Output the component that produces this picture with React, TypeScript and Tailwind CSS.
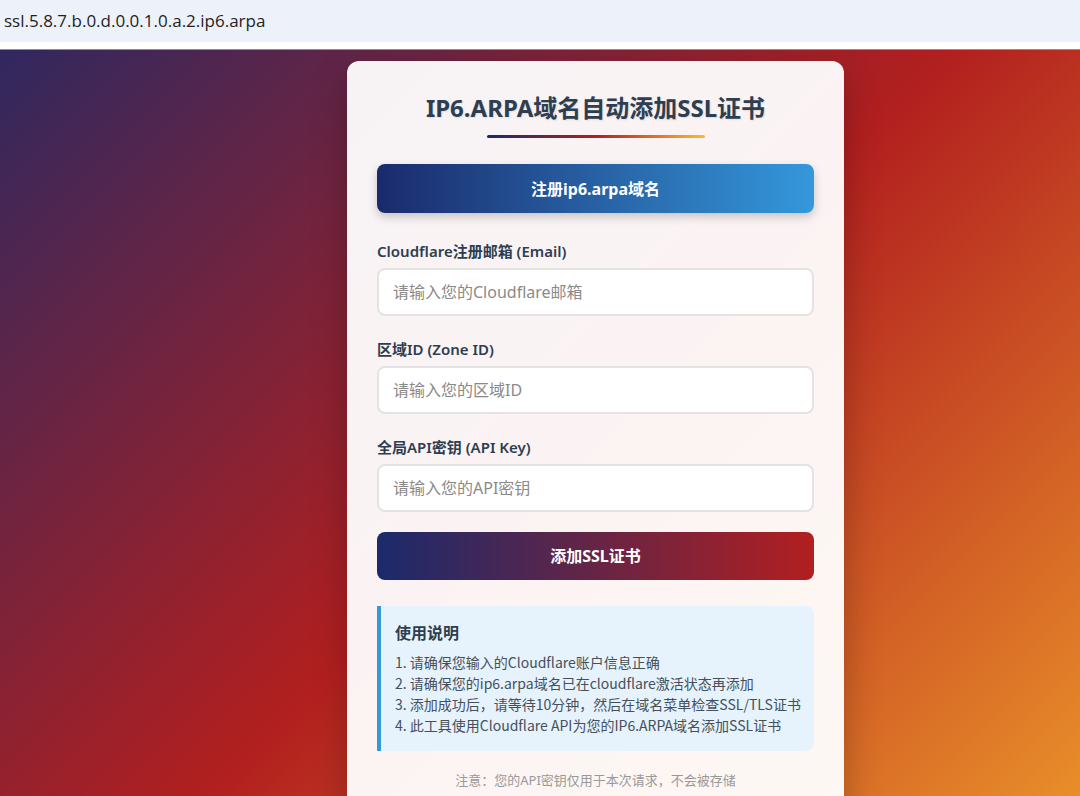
const FONT = 'font-["Noto_Sans","Noto_Sans_CJK_SC",sans-serif]'

const FIELDS = [
  { label: 'Cloudflare注册邮箱 (Email)', placeholder: '请输入您的Cloudflare邮箱' },
  { label: '区域ID (Zone ID)', placeholder: '请输入您的区域ID' },
  { label: '全局API密钥 (API Key)', placeholder: '请输入您的API密钥' },
]

const STEPS = [
  '1. 请确保您输入的Cloudflare账户信息正确',
  '2. 请确保您的ip6.arpa域名已在cloudflare激活状态再添加',
  '3. 添加成功后，请等待10分钟，然后在域名菜单检查SSL/TLS证书',
  '4. 此工具使用Cloudflare API为您的IP6.ARPA域名添加SSL证书',
]

export default function App() {
  return (
    <div className={`w-[1080px] h-[796px] overflow-hidden flex flex-col bg-white ${FONT}`}>
      {/* address bar */}
      <div className="h-[42px] shrink-0 bg-[#edf1f9] flex items-center px-[4px] text-[17px] text-[#1f1f1f] font-['Open_Sans',sans-serif]">
        ssl.5.8.7.b.0.d.0.0.1.0.a.2.ip6.arpa
      </div>
      <div className="h-[8px] shrink-0 bg-white border-b border-[#9a8a95]" />

      <div className="flex-1 overflow-hidden bg-[linear-gradient(135deg,#30285f_0%,#b21f1f_52%,#e98e2a_100%)] pt-[11px] pl-[347px]">
        <div className="w-[497px] bg-white/95 rounded-[12px] shadow-[0_15px_35px_rgba(0,0,0,0.25)] px-[30px] pt-[31px] pb-[60px]">
          <h1 className="text-center text-[24px] leading-[32px] font-bold text-[#2c3e50] [text-shadow:1px_1px_2px_rgba(0,0,0,0.1)]">
            IP6.ARPA域名自动添加SSL证书
          </h1>
          <div className="mx-auto mt-[11px] w-[218px] h-[3px] rounded-full bg-[linear-gradient(90deg,#1a2a6c,#b21f1f,#fdbb2d)]" />

          <button className="mt-[26px] w-full h-[49px] rounded-[8px] bg-[linear-gradient(90deg,#1a2a6c,#3498db)] text-white text-[16px] font-bold shadow-[0_4px_10px_rgba(0,0,0,0.2)]">
            注册ip6.arpa域名
          </button>

          <div className="mt-[28px] flex flex-col gap-[23px]">
            {FIELDS.map(f => (
              <div key={f.label} className="flex flex-col gap-[7px]">
                <label className="text-[15px] leading-[20px] font-semibold text-[#2c3e50]">{f.label}</label>
                <input
                  className="w-full h-[48px] rounded-[8px] border-2 border-[#e3e3e3] bg-white px-[14px] text-[16px] placeholder:text-[#8a8a8a] outline-none"
                  placeholder={f.placeholder}
                />
              </div>
            ))}
          </div>

          <button className="mt-[20px] w-full h-[48px] rounded-[8px] bg-[linear-gradient(90deg,#1a2a6c,#b21f1f)] text-white text-[16px] font-bold">
            添加SSL证书
          </button>

          <div className="mt-[26px] bg-[#e6f3fd] border-l-4 border-[#3498db] rounded-r-[8px] pl-[14px] pr-[8px] pt-[15px] pb-[15px]">
            <h3 className="text-[16px] leading-[24px] font-bold text-[#2c3e50]">使用说明</h3>
            <ol className="mt-[7px] text-[14px] leading-[21px] text-[#454f5a] font-['Noto_Sans_CJK_SC',sans-serif] whitespace-nowrap">
              {STEPS.map(s => (
                <li key={s}>{s}</li>
              ))}
            </ol>
          </div>

          <p className="mt-[19px] text-center text-[13px] leading-[20px] text-[#999]">
            注意：您的API密钥仅用于本次请求，不会被存储
          </p>
        </div>
      </div>
    </div>
  )
}
